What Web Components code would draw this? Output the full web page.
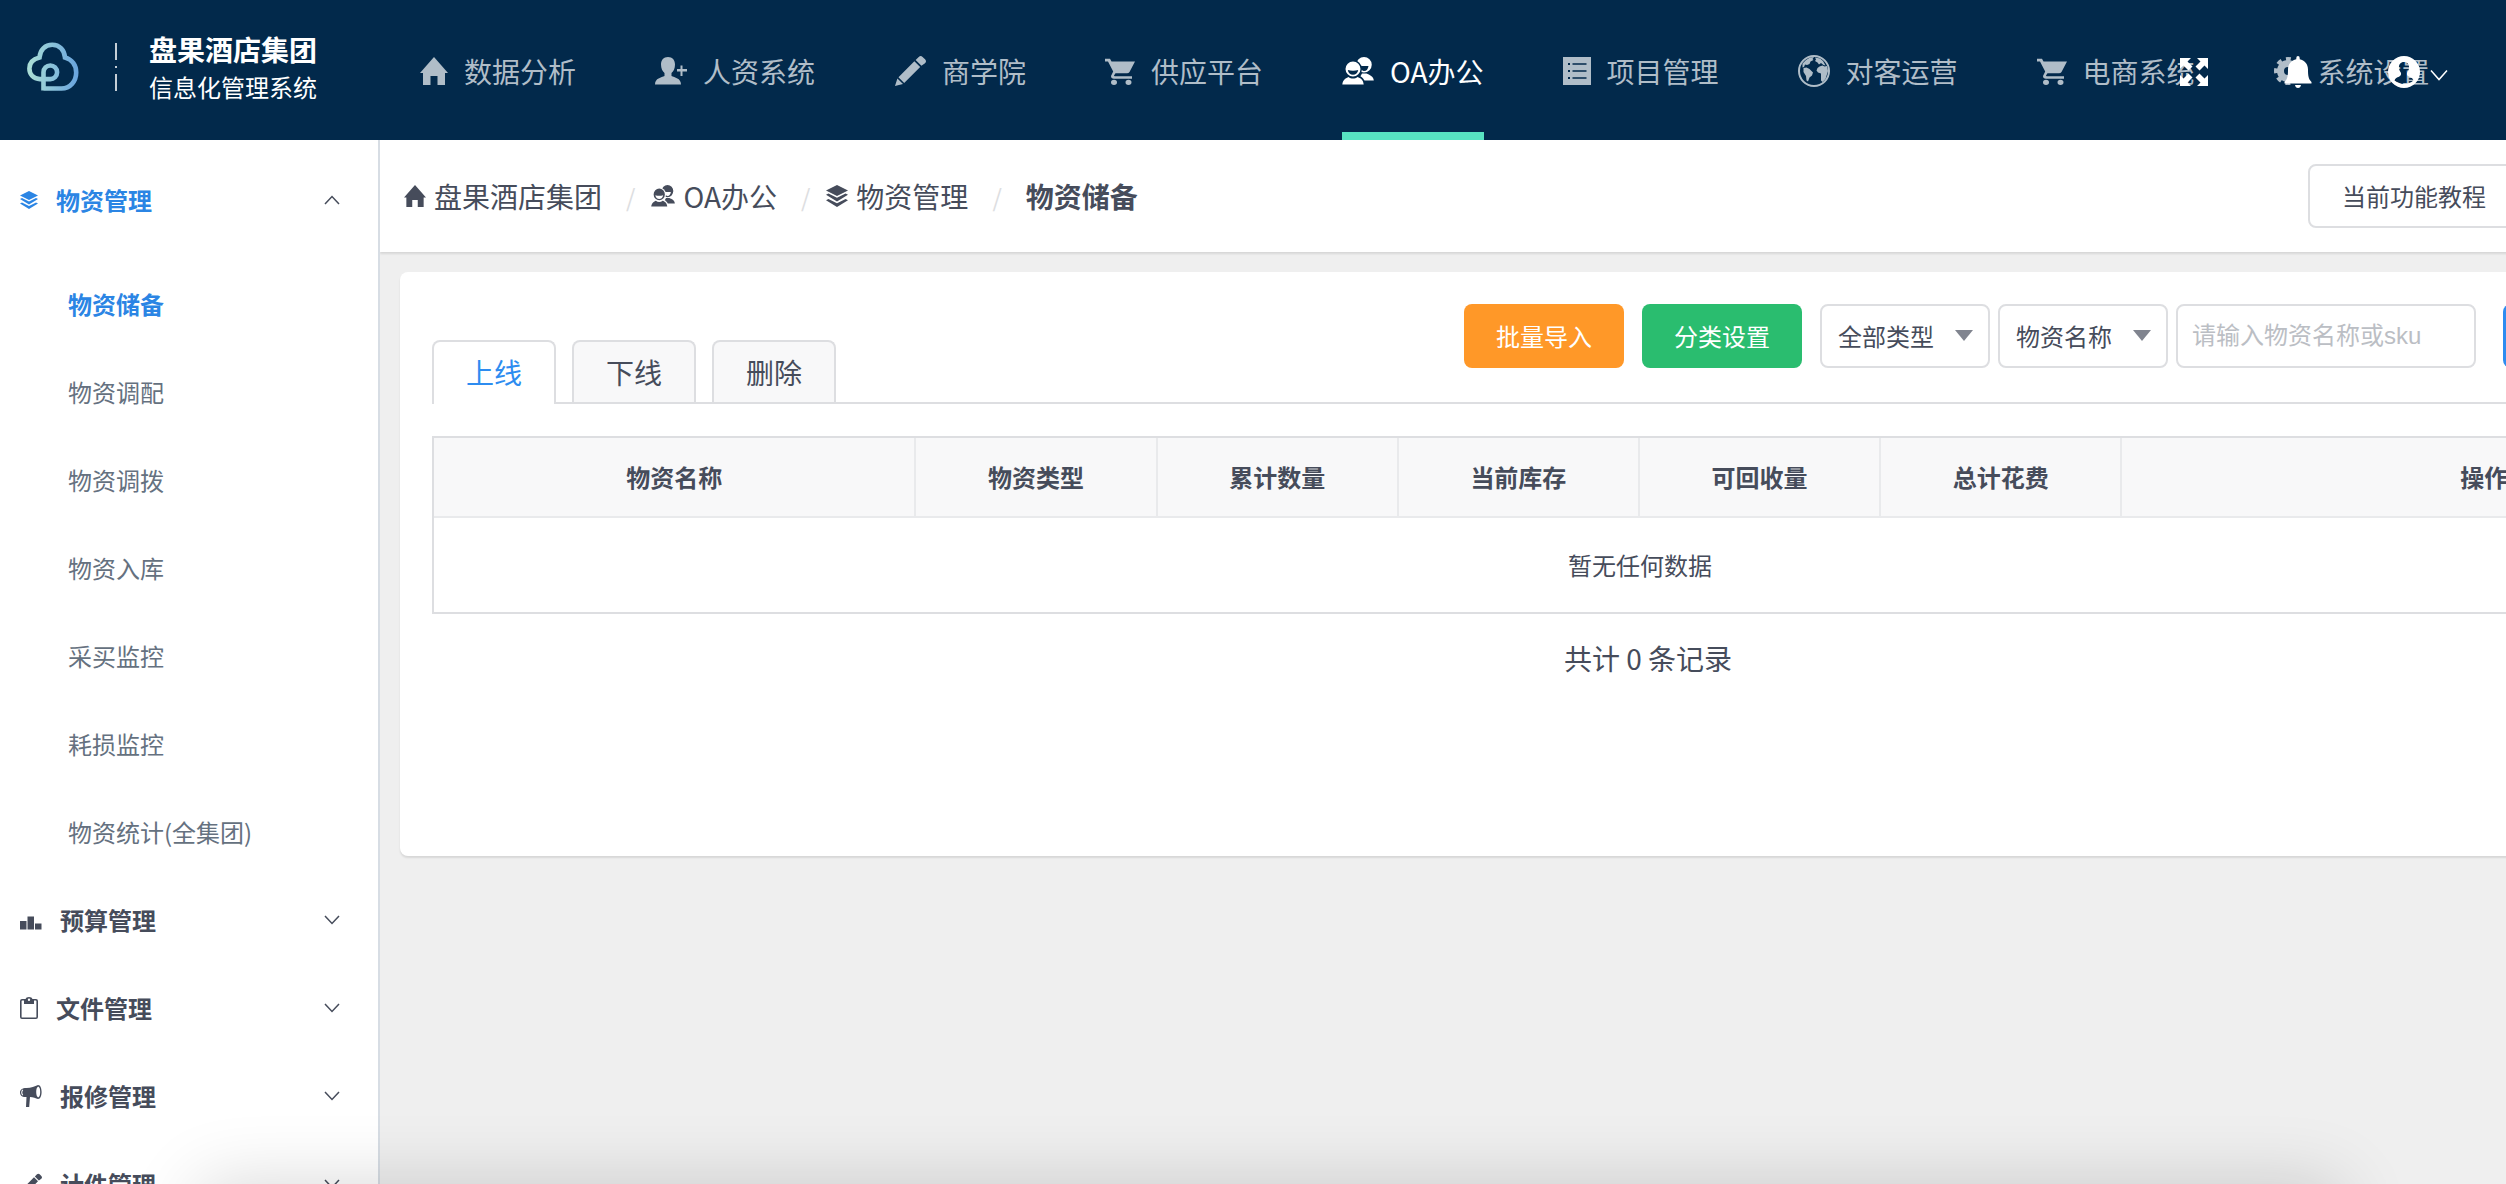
<!DOCTYPE html>
<html lang="zh-CN">
<head>
<meta charset="utf-8">
<title>物资储备 - 信息化管理系统</title>
<style>
  html, body { height: 100%; margin: 0; overflow: hidden; }
  body {
    --ink: #464c5b; --muted: #657180; --blue: #2b85e4; --line: #dddee1; --soft: #e9eaec;
    font-family: "Noto Sans CJK SC", "Noto Sans", sans-serif;
    font-size: 24px; color: var(--ink); background: #efefef;
  }
</style>
</head>
<body>
<app-shell>
  <app-header slot="header">
    <nav-item icon="home">数据分析</nav-item>
    <nav-item icon="personAdd">人资系统</nav-item>
    <nav-item icon="pencil">商学院</nav-item>
    <nav-item icon="cart">供应平台</nav-item>
    <nav-item icon="people" active>OA办公</nav-item>
    <nav-item icon="list">项目管理</nav-item>
    <nav-item icon="earth">对客运营</nav-item>
    <nav-item icon="cart">电商系统</nav-item>
    <nav-item icon="gear">系统设置</nav-item>
  </app-header>

  <side-menu slot="side">
    <side-group icon="layers" label="物资管理" open>
      <side-link active>物资储备</side-link>
      <side-link>物资调配</side-link>
      <side-link>物资调拨</side-link>
      <side-link>物资入库</side-link>
      <side-link>采买监控</side-link>
      <side-link>耗损监控</side-link>
      <side-link>物资统计(全集团)</side-link>
    </side-group>
    <side-group icon="bars" label="预算管理"></side-group>
    <side-group icon="clipboard" label="文件管理"></side-group>
    <side-group icon="megaphone" label="报修管理"></side-group>
    <side-group icon="pencilSmall" label="计件管理"></side-group>
  </side-menu>

  <crumb-bar>
    <crumb-item icon="homeSmall">盘果酒店集团</crumb-item>
    <crumb-item icon="peopleSmall">OA办公</crumb-item>
    <crumb-item icon="layersLarge">物资管理</crumb-item>
    <crumb-item current>物资储备</crumb-item>
    <plain-button slot="action" kind="outline">当前功能教程</plain-button>
  </crumb-bar>

  <page-card>
    <tab-item slot="tabs" active>上线</tab-item>
    <tab-item slot="tabs">下线</tab-item>
    <tab-item slot="tabs">删除</tab-item>
    <filter-bar slot="tools"></filter-bar>
    <stock-table></stock-table>
    <record-count total="0"></record-count>
  </page-card>
</app-shell>

<script>
const HOME = '<path d="M14 0 28 16h-3v12h-7.500v-9h-7v9H3V16H0z"/>';
const PEOPLE = `<mask id="m"><path fill="#fff" d="M0 0h32v28H0z"/><circle cx="11" cy="12" r="9" fill="#000"/><path d="M-1 29C0 21 4 19 7 18h8c4 1 8 3 8.500 11z" fill="#000"/></mask>
 <g mask="url(#m)"><path fill-rule="evenodd" d="M22 0a7.500 7.500 0 0 1 0 15.500A7.500 7.500 0 0 1 22 0zM18 9h8.500c-.4 3-2 5-4.300 5-1.500 0-3-1-4.200-5z"/><path d="M16 23.500 20 16.500h4.500c3 1.500 7 2.500 7.300 7z"/></g>
 <path fill-rule="evenodd" d="M11 4.500a7.500 7.500 0 0 1 0 15 7.500 7.500 0 0 1 0-15zM5.800 13c.4 3 2.500 4.800 5.200 4.800s4.800-1.800 5.200-4.800c-3 1-7.400 1-10.400 0z"/>
 <path d="M.3 27.500C1 22.500 4 21 6.500 20c2.500 2 6.500 2 9 0 3 1 5.700 2.500 6.200 7.500z"/>`;
const LAYERS = '<path d="M9 0 18 4.500 9 9 0 4.500z"/><path d="m0 8 2-1 7 3.500L16 7l2 1-9 5.500zM0 12.500l2-1L9 15l7-3.500 2 1L9 18z"/>';
const PENCIL = '<path d="M1 32 3.500 24.200 9.300 30zM4.600 23 21 6.500l6 6L10.500 29zM22.300 5.200 25.500 2q2-2 4 0l2.500 2.500q2 2 0 4L28.300 11.200z"/>';
const CART = '<path d="M9 26a3 3 0 1 1 0 6 3 3 0 0 1 0-6zm14.500 0a3 3 0 1 1 0 6 3 3 0 0 1 0-6zM0 3h5l1.500 3H30l-5.500 11.500q-.8 1.500-2.500 1.500H10.500L9 21.500q0 .8.800.8H27v2.700H9q-3 0-3-3L8.200 17 3 6H0z"/>';
const ICONS = {
  home: [28, 28, HOME], homeSmall: [22, 22, HOME, 28, 28],
  personAdd: [32, 28, '<path d="M13 0c4.500 0 7 3 7 7.500 0 4-1.500 7-3.500 8.500v3c3 1.500 9.500 2 9.500 8.500H0C0 21 6.500 20.500 9.500 19v-3C7.500 14.500 6 11.500 6 7.500 6 3 8.500 0 13 0z"/><path d="M25.500 8.500h2V12H32v2.500h-4.500V19h-2v-4.500H22V12h3.500z"/>'],
  pencil: [32, 32, PENCIL, 33, 33], pencilSmall: [22, 22, PENCIL, 33, 33],
  cart: [30, 30, CART, 30, 33],
  people: [32, 28, PEOPLE], peopleSmall: [24, 22, PEOPLE, 32, 28],
  list: [28, 28, '<path fill-rule="evenodd" d="M0 0h28v28H0zM5 6v2h2V6zM5 13v2h2v-2zM5 20v2h2v-2zM9.500 6.300v1.400h14V6.300zM9.500 13.300v1.400h14v-1.400zM9.500 20.300v1.400h14v-1.400z"/>'],
  earth: [32, 32, '<path fill-rule="evenodd" d="M16 0a16 16 0 1 1 0 32 16 16 0 0 1 0-32zm0 2a14 14 0 1 0 0 28 14 14 0 0 0 0-28z"/><path d="M4.500 8.500 8 5l4-2.500 4-.5-1.500 2 1 1-3 1.500-1 2.500L9 10l-2-.5-1 2.500-1.500.5zM5.500 13l3-.5 3 1.500 3.500 3.500-1 3-2.500 2-1.500 4-1.500-1L8 21l-2.500-4zM17 2.500l5 1 3 2.500 2.500 4.500-2-.5-2.500-2-2 1.500-1.500-2L17 6l1-1.500zM21.500 11.500l3-1 2 1 2.500-.5 1 5-2.500 8-3 3-1.500-1.500v-7l-3-1-1.500-2 1-2.500z"/>'],
  gear: [28, 28, '<circle cx="14" cy="14" r="7.500" fill="none" stroke="currentColor" stroke-width="7"/><circle cx="14" cy="14" r="12" fill="none" stroke="currentColor" stroke-width="4" stroke-dasharray="4.800 4.625" stroke-dashoffset="2.400"/>'],
  bell: [28, 32, '<path d="M14 0q1.700 0 1.700 2v1.300c4.800 1 8.300 4.700 8.300 10.200 0 6.500.5 9.500 3.500 12.500v1.500H.5V26C3.500 23 4 20 4 13.500 4 8 7.500 4.300 12.300 3.300V2q0-2 1.700-2zM11 29h6q-.5 3-3 3t-3-3z"/>'],
  contact: [32, 32, '<path fill-rule="evenodd" d="M16 0a16 16 0 1 1 0 32 16 16 0 0 1 0-32zm0 6c-3.500 0-5.300 2.500-5 6 .2 2.500 1.500 3.500 2 5 .4 2-.5 3-2 3.700-2 .8-4 1.300-4.500 3.800 5 4.500 14 4.500 19 0-.5-2.500-2.500-3-4.500-3.800-1.500-.7-2.400-1.700-2-3.700.5-1.500 1.800-2.500 2-5 .3-3.500-1.500-6-5-6z"/>'],
  expand: [28, 28, '<path d="M0 0h11L7.500 3.500l5 5-4 4-5-5L0 11zM28 0v11l-3.500-3.500-5 5-4-4 5-5L17 0zM0 28V17l3.500 3.500 5-5 4 4-5 5L11 28zM28 28H17l3.500-3.500-5-5 4-4 5 5L28 17z"/>'],
  layers: [18, 18, LAYERS], layersLarge: [22, 22, LAYERS, 18, 18],
  bars: [22, 22, '<path d="M0 12h6.500v8.500H0zM7.500 7.500H14v13H7.500zM15 14.500h6.500v6H15z"/>'],
  clipboard: [18, 22, '<path fill-rule="evenodd" d="M2 2h3.500Q6 0 9 0t3.500 2H16q2 0 2 2v16q0 2-2 2H2q-2 0-2-2V4q0-2 2-2zm-.4 2v16q0 .5.600.5h13.600q.6 0 .6-.5V4q0-.5-.6-.5H14V7H4V3.500H2.200q-.6 0-.6.5zM9 1.500a1.200 1.200 0 1 0 0 2.400 1.200 1.200 0 0 0 0-2.400z"/>'],
  megaphone: [22, 22, '<path fill-rule="evenodd" d="M18 0c2.500 0 3.600 3.500 3.600 7s-1.100 7-3.600 7c-2-.6-5-1.900-8-2l-.8 10H6L6.500 12C2 12.500 0 10 0 7.500S2 3 6.500 3C11 3 15 1.500 18 0zm.2 1.500c-1.200.5-2 2.500-2 5.500s.8 5 2 5.500c1.300-.5 2-2.500 2-5.500s-.7-5-2-5.500zM2.500 4.500C.8 6 .8 9 2.500 10.500L3.200 10C2 8.500 2 6.500 3.200 5z"/>'],
  up: [16, 10, '<path d="M1 9 8 1.500 15 9" fill="none" stroke="currentColor" stroke-width="1.500"/>'],
  down: [16, 10, '<path d="M1 1 8 8.500 15 1" fill="none" stroke="currentColor" stroke-width="1.500"/>'],
  downLarge: [18, 18, '<path d="M1 7.500 9 16.500 17 7.500" fill="none" stroke="currentColor" stroke-width="1.500"/>'],
  caret: [18, 12, '<path d="M0 0h18L9 11z"/>'],
  brand: [52, 50, '<defs><linearGradient id="g" x1="0" y1="0" x2="1" y2="0"><stop offset="0" stop-color="#a9ddd6"/><stop offset="1" stop-color="#6ba6de"/></linearGradient></defs><path fill="none" stroke="url(#g)" stroke-width="4.600" d="M16.500 48.500V30.300a6.800 6.800 0 1 1 6.800 6.800H13C6 37 2.400 32 2.400 26.500 2.400 20.500 6.500 17 12.500 15.500 13 8 18 2.800 25.300 2.800S37.500 8 38 15.500c7 2 11.200 7.500 11.200 15 0 9-6.200 16-14.700 16h-18"/>'],
};
function icon(name, cls = '') {
  const [w, h, body, vw = w, vh = h] = ICONS[name];
  return `<svg class="${cls}" width="${w}" height="${h}" viewBox="0 0 ${vw} ${vh}" preserveAspectRatio="none" fill="currentColor" aria-hidden="true">${body}</svg>`;
}
const BASE = '*{box-sizing:border-box}svg{display:block;flex:none}a{color:inherit;text-decoration:none}button,select,input{font:inherit;color:inherit;margin:0}';
function define(tag, view) {
  customElements.define(tag, class extends HTMLElement {
    connectedCallback() {
      if (this.shadowRoot) return;
      const root = this.attachShadow({ mode: 'open' });
      const [css, html] = view(this);
      root.innerHTML = `<style>${BASE}${css}</style>${html}`;
    }
  });
}

define('app-shell', () => [`
  :host{display:flex;flex-direction:column;height:100vh;overflow:hidden;position:relative}
  .body{display:flex;flex:1;min-height:0}
  main{flex:1;min-width:0;overflow:hidden}
  .glow{position:absolute;top:100%;left:200px;right:166px;height:160px;box-shadow:0 0 72px rgba(0,0,0,.16);pointer-events:none}`,
  `<slot name="header"></slot><div class="body"><slot name="side"></slot><main><slot></slot></main></div><div class="glow"></div>`]);

define('app-header', () => [`
  :host{display:block;flex:none;background:#02294b;color:#fff;position:relative}
  header{display:flex;align-items:center;height:140px;padding-left:27px;white-space:nowrap}
  .brand{display:flex;align-items:center;width:393px;flex:none;padding-bottom:6px}
  .rule{margin:0 32px 0 36px;color:#c5ced6}
  .name{display:flex;flex-direction:column}
  strong{font-size:28px;line-height:40px}
  .name span{font-size:24px;line-height:36px}
  nav{display:flex;gap:79px}
  .tools{position:absolute;top:0;right:58px;height:140px;padding-top:4px;display:flex;align-items:center;gap:76px}
  .tools button{display:flex;align-items:center;gap:10px;padding:0;border:0;background:none;height:48px}`,
  `<header><a class="brand" href="#">${icon('brand')}
    <svg class="rule" width="2" height="48" viewBox="0 0 2 48" fill="currentColor" aria-hidden="true"><path d="M0 0h2v17H0zM0 23h2v2H0zM0 31h2v17H0z"/></svg>
    <span class="name"><strong>盘果酒店集团</strong><span>信息化管理系统</span></span></a>
    <nav><slot></slot></nav></header>
   <div class="tools"><button aria-label="全屏">${icon('expand')}</button><button aria-label="通知">${icon('bell')}</button><button aria-label="账户">${icon('contact')}${icon('downLarge')}</button></div>`]);

define('nav-item', el => [`
  :host{display:block;flex:none;color:#b0bdc8;font-size:28px}
  :host([active]){color:#fff}
  a{display:flex;align-items:center;gap:16px;height:140px;padding-top:10px;border-bottom:8px solid transparent}
  :host([active]) a{border-bottom-color:#57e3c2}`,
  `<a href="#">${icon(el.getAttribute('icon'))}<span><slot></slot></span></a>`]);

define('side-menu', () => [`
  :host{display:block;flex:none;width:380px;background:#fff;border-right:2px solid #d7dde4;padding-top:16px;overflow:hidden;box-sizing:border-box}`,
  `<nav><slot></slot></nav>`]);

define('side-group', el => {
  const open = el.hasAttribute('open');
  return [`
  :host{display:block}
  button{display:flex;align-items:center;gap:18px;width:100%;height:88px;padding:0 38px 0 20px;border:0;background:none;font-weight:700;text-align:left}
  button span{padding-bottom:2px}
  :host([open]) button{color:var(--blue)}
  :host([open]) .list{padding-top:16px}
  .arrow{margin-left:auto;color:var(--ink)}`,
  `<button aria-expanded="${open}">${icon(el.getAttribute('icon'))}<span>${el.getAttribute('label')}</span>${icon(open ? 'up' : 'down', 'arrow')}</button><div class="list"><slot></slot></div>`];
});

define('side-link', () => [`
  :host{display:block;color:var(--muted)}
  :host([active]){color:var(--blue);font-weight:700}
  a{display:block;line-height:88px;padding-left:68px}`,
  `<a href="#"><slot></slot></a>`]);

define('crumb-bar', () => [`
  :host{display:flex;align-items:center;justify-content:space-between;min-width:2140px;height:112px;padding-left:24px;box-sizing:border-box;background:#fff;box-shadow:0 2px 2px rgba(0,0,0,.1)}
  nav{display:flex}`,
  `<nav aria-label="位置"><slot></slot></nav><slot name="action"></slot>`]);

define('crumb-item', el => {
  const last = el.hasAttribute('current'), name = el.getAttribute('icon');
  return [`
  :host{display:flex;align-items:center;font-size:28px}
  a{display:flex;align-items:center;gap:8px}
  :host([current]){font-weight:700;padding-left:8px}
  .sep{color:var(--line);font-size:24px;padding:0 16px 0 24px}`,
  `<a href="#">${name ? icon(name) : ''}<span><slot></slot></span></a>${last ? '' : '<span class="sep">/</span>'}`];
});

define('plain-button', el => [`
  :host{display:block;flex:none}
  button{display:block;height:64px;min-width:160px;padding:0 30px 2px;border:2px solid transparent;border-radius:8px;color:#fff;white-space:nowrap}
  :host([kind=outline]) button{padding:0 32px 2px;background:#fff;border-color:var(--line);color:var(--ink)}
  :host([kind=orange]) button{background:#ff9828}
  :host([kind=green]) button{background:#2abd6f}
  :host([kind=blue]) button{background:#2d8cf0}`,
  `<button ${el.title ? `aria-label="${el.title}"` : ''}><slot></slot></button>`]);

define('page-card', () => [`
  :host{display:block;min-width:2480px;margin:20px;padding:32px 32px 156px;box-sizing:border-box;background:#fff;border-radius:8px;box-shadow:0 2px 2px rgba(0,0,0,.1)}
  .head{display:flex;align-items:flex-end;justify-content:space-between;border-bottom:2px solid var(--line);margin-bottom:32px}
  .tabs{display:flex;align-items:flex-end;gap:16px}`,
  `<div class="head"><div class="tabs" role="tablist"><slot name="tabs"></slot></div><slot name="tools"></slot></div><slot></slot>`]);

define('tab-item', el => [`
  :host{display:block;font-size:28px}
  button{display:block;width:124px;height:62px;padding:0;border:2px solid var(--line);border-bottom:0;border-radius:8px 8px 0 0;background:#f8f8f9}
  :host([active]){margin-bottom:-2px;color:#2d8cf0}
  :host([active]) button{height:64px;padding-bottom:2px;background:#fff}`,
  `<button role="tab" aria-selected="${el.hasAttribute('active')}"><slot></slot></button>`]);

define('filter-bar', () => [`
  :host{display:flex;flex:none;width:1384px;margin-bottom:34px}
  .actions{display:flex;gap:18px;margin-right:18px}
  .fields{display:flex;gap:8px;margin-right:27px}
  .pick{display:grid;grid-template-columns:1fr auto;align-items:center;width:170px;height:64px}
  select{grid-area:1/1/2/3;width:100%;height:64px;appearance:none;border:2px solid var(--line);border-radius:8px;background:#fff;padding:0 44px 2px 16px}
  .caret{grid-area:1/2;margin-right:17px;color:#80848f;pointer-events:none}
  input{width:300px;height:64px;border:2px solid var(--line);border-radius:8px;padding:0 14px;background:#fff;font-family:"Liberation Sans","Noto Sans CJK SC",sans-serif}
  input::placeholder{color:#bbbec4;opacity:1}`,
  `<div class="actions"><plain-button kind="orange">批量导入</plain-button><plain-button kind="green">分类设置</plain-button></div>
   <div class="fields">
    <label class="pick"><select aria-label="类型"><option>全部类型</option></select>${icon('caret', 'caret')}</label>
    <label class="pick"><select aria-label="搜索字段"><option>物资名称</option></select>${icon('caret', 'caret')}</label>
    <input type="text" aria-label="关键字" placeholder="请输入物资名称或sku">
   </div><plain-button kind="blue" title="搜索"></plain-button>`]);

define('stock-table', () => [`
  :host{display:block}
  table{width:100%;table-layout:fixed;border:2px solid var(--line);border-spacing:0}
  col{width:10%}col:first-child{width:20%}col:last-child{width:30%}
  th{height:80px;padding:0 0 2px;background:#f8f8f9;font-weight:700;border-bottom:2px solid var(--soft);border-right:2px solid var(--soft)}
  th:last-child{border-right:0}
  td{height:94px;padding:0 0 2px;text-align:center}`,
  `<table><colgroup>${'<col>'.repeat(7)}</colgroup><thead><tr>${['物资名称', '物资类型', '累计数量', '当前库存', '可回收量', '总计花费', '操作'].map(t => `<th scope="col">${t}</th>`).join('')}</tr></thead>
   <tbody><tr><td colspan="7">暂无任何数据</td></tr></tbody></table>`]);

define('record-count', el => [`
  :host{display:block;padding:24px 0 0 16px;text-align:center;font-size:28px;line-height:40px}
  p{margin:0 0 22px}`,
  `<p>共计 ${el.getAttribute('total')} 条记录</p>`]);
</script>
</body>
</html>
